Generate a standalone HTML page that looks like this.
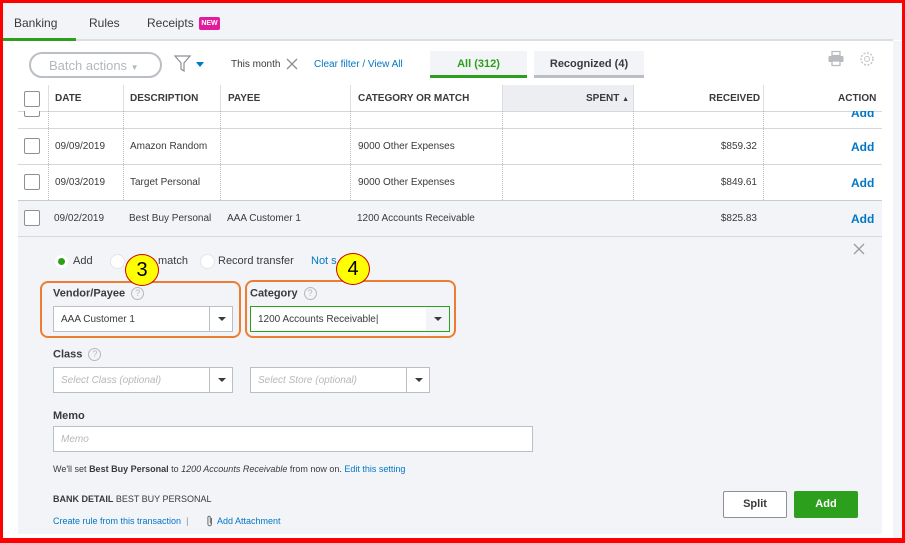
<!DOCTYPE html>
<html><head><style>
*{box-sizing:border-box;margin:0;padding:0}
body{width:905px;height:543px;overflow:hidden;background:#fff;font-family:"Liberation Sans",sans-serif;color:#393a3d;position:relative}
.a{position:absolute}
.t{font-size:11px;white-space:nowrap}
.h{font-size:10px;font-weight:bold;color:#393a3d}
.cb{position:absolute;width:16px;height:16px;border:1px solid #8d9096;border-radius:2px;background:#fff}
.vl{position:absolute;width:0;border-left:1px dotted #bbb}
.hl{position:absolute;height:1px;background:#d4d7dc}
.lnk{color:#0077c5}
.add{position:absolute;font-size:12px;font-weight:bold;color:#0077c5}
.amt{position:absolute;right:148px;font-size:10px;white-space:nowrap}
.inp{position:absolute;background:#fff;border:1px solid #babec5;height:26px;font-size:10px;padding:7px 7px;white-space:nowrap}
.dd{position:absolute;top:0;right:0;width:23px;height:24px;border-left:1px solid #babec5}
.dd:after{content:"";position:absolute;left:8px;top:10px;border:4px solid transparent;border-top:4px solid #393a3d}
.lab{position:absolute;font-size:11px;font-weight:bold;color:#393a3d}
.q{display:inline-block;width:13px;height:13px;border:1px solid #b5b7bb;border-radius:50%;font-size:9px;color:#b5b7bb;text-align:center;line-height:11px;font-weight:normal;margin-left:6px;vertical-align:middle}
.num{position:absolute;width:34px;height:32px;border-radius:50%;background:#ffff00;border:1px solid #c00;font-size:20px;text-align:center;line-height:31px;color:#000}
.ob{position:absolute;border:2px solid #ed7d31;border-radius:8px}
</style></head><body>
<div class="a" style="left:0;top:0;width:905px;height:40px;background:#f3f4f7"></div>
<div class="a" style="left:3px;top:39px;width:890px;height:2px;background:#dcdee2"></div>
<div class="a" style="left:3px;top:38px;width:73px;height:3px;background:#2ca01c"></div>
<div class="a t" style="left:14px;top:16px;font-size:12px">Banking</div>
<div class="a t" style="left:89px;top:16px;font-size:12px">Rules</div>
<div class="a t" style="left:147px;top:16px;font-size:12px">Receipts</div>
<div class="a" style="left:199px;top:17px;width:21px;height:13px;background:#e31c9e;border-radius:2px;color:#fff;font-size:7px;font-weight:bold;text-align:center;line-height:13px">NEW</div>
<div class="a" style="left:893px;top:41px;width:9px;height:500px;background:#f3f4f7"></div>
<div class="a" style="left:29px;top:52px;width:133px;height:26px;border:2px solid #babec5;border-radius:14px;color:#b5b7bb;font-size:13px;padding:4px 0 0 18px">Batch actions <span style="font-size:8px">▼</span></div>
<svg class="a" style="left:174px;top:55px" width="34" height="18"><path d="M1 1h15l-6 7v8l-3-2V8z" fill="none" stroke="#8d9096" stroke-width="1.2"/><path d="M22 7h8l-4 5z" fill="#0077c5"/></svg>
<div class="a t" style="left:231px;top:59px;font-size:10px">This month</div>
<svg class="a" style="left:286px;top:58px" width="12" height="12"><path d="M1 1l10 10M11 1L1 11" stroke="#8d9096" stroke-width="1.3"/></svg>
<div class="a t lnk" style="left:314px;top:59px;font-size:10px">Clear filter / View All</div>
<div class="a" style="left:430px;top:51px;width:97px;height:27px;background:#f3f4f7;border-bottom:3px solid #2ca01c;color:#2ca01c;font-size:11px;font-weight:bold;text-align:center;padding-top:7px">All (312)</div>
<div class="a" style="left:534px;top:51px;width:110px;height:27px;background:#f3f4f7;border-bottom:3px solid #babec5;font-size:11px;font-weight:bold;text-align:center;padding-top:7px">Recognized (4)</div>
<svg class="a" style="left:827px;top:50px" width="50" height="18"><path d="M5 1.5h8v4H5z" fill="none" stroke="#b8bbc0" stroke-width="1.3"/><rect x="1.5" y="6" width="15" height="6" rx="1" fill="#b8bbc0"/><rect x="5" y="11" width="8" height="4.5" fill="#fff" stroke="#b8bbc0" stroke-width="1.3"/><circle cx="40" cy="9" r="6" fill="none" stroke="#c4c6ca" stroke-width="1.5" stroke-dasharray="2 1.5"/><circle cx="40" cy="9" r="2.5" fill="none" stroke="#c4c6ca"/></svg>
<div class="a" style="left:502px;top:85px;width:131px;height:26px;background:#eceef1"></div>
<div class="hl" style="left:18px;top:111px;width:864px"></div>
<div class="cb" style="left:24px;top:91px"></div>
<div class="a" style="left:48px;top:85px;height:26px;border-left:1px solid #dcdee2"></div>
<div class="a" style="left:123px;top:85px;height:26px;border-left:1px solid #dcdee2"></div>
<div class="a" style="left:220px;top:85px;height:26px;border-left:1px solid #dcdee2"></div>
<div class="a" style="left:350px;top:85px;height:26px;border-left:1px solid #dcdee2"></div>
<div class="a" style="left:502px;top:85px;height:26px;border-left:1px solid #dcdee2"></div>
<div class="a" style="left:633px;top:85px;height:26px;border-left:1px solid #dcdee2"></div>
<div class="a" style="left:763px;top:85px;height:26px;border-left:1px solid #dcdee2"></div>
<div class="a h" style="left:55px;top:93px">DATE</div>
<div class="a h" style="left:130px;top:93px">DESCRIPTION</div>
<div class="a h" style="left:228px;top:93px">PAYEE</div>
<div class="a h" style="left:358px;top:93px">CATEGORY OR MATCH</div>
<div class="a h" style="left:586px;top:93px">SPENT <span style="font-size:7px">▲</span></div>
<div class="a h" style="left:709px;top:93px">RECEIVED</div>
<div class="a h" style="left:838px;top:93px">ACTION</div>
<div class="vl" style="left:48px;top:111px;height:89px"></div>
<div class="vl" style="left:123px;top:111px;height:89px"></div>
<div class="vl" style="left:220px;top:111px;height:89px"></div>
<div class="vl" style="left:350px;top:111px;height:89px"></div>
<div class="vl" style="left:502px;top:111px;height:89px"></div>
<div class="vl" style="left:633px;top:111px;height:89px"></div>
<div class="vl" style="left:763px;top:111px;height:89px"></div>
<div class="cb" style="left:24px;top:111px;height:6px;border-top:none;border-radius:0 0 2px 2px"></div>
<div class="add" style="left:851px;top:106px;clip-path:inset(5px 0 0 0)">Add</div>
<div class="hl" style="left:18px;top:128px;width:864px"></div>
<div class="cb" style="left:24px;top:138px"></div>
<div class="a t" style="left:55px;top:141px;font-size:10px">09/09/2019</div>
<div class="a t" style="left:130px;top:141px;font-size:10px">Amazon Random</div>
<div class="a t" style="left:358px;top:141px;font-size:10px">9000 Other Expenses</div>
<div class="amt" style="top:141px">$859.32</div>
<div class="add" style="left:851px;top:140px">Add</div>
<div class="hl" style="left:18px;top:164px;width:864px"></div>
<div class="cb" style="left:24px;top:174px"></div>
<div class="a t" style="left:55px;top:177px;font-size:10px">09/03/2019</div>
<div class="a t" style="left:130px;top:177px;font-size:10px">Target Personal</div>
<div class="a t" style="left:358px;top:177px;font-size:10px">9000 Other Expenses</div>
<div class="amt" style="top:177px">$849.61</div>
<div class="add" style="left:851px;top:176px">Add</div>
<div class="a" style="left:18px;top:200px;width:864px;height:334px;background:#f3f4f7;border-top:1px solid #c8cbd0"></div>
<div class="hl" style="left:18px;top:236px;width:864px;background:#d4d7dc"></div>
<div class="cb" style="left:24px;top:210px"></div>
<div class="a t" style="left:54px;top:213px;font-size:10px">09/02/2019</div>
<div class="a t" style="left:129px;top:213px;font-size:10px">Best Buy Personal</div>
<div class="a t" style="left:227px;top:213px;font-size:10px">AAA Customer 1</div>
<div class="a t" style="left:357px;top:213px;font-size:10px">1200 Accounts Receivable</div>
<div class="amt" style="top:213px">$825.83</div>
<div class="add" style="left:851px;top:212px">Add</div>
<svg class="a" style="left:853px;top:243px" width="12" height="12"><path d="M1 1l10 10M11 1L1 11" stroke="#9a9ca0" stroke-width="1.3"/></svg>
<div class="a" style="left:55px;top:255px;width:13px;height:13px;border-radius:50%;background:#fff"></div>
<div class="a" style="left:58px;top:258px;width:7px;height:7px;border-radius:50%;background:#2ca01c"></div>
<div class="a t" style="left:73px;top:255px">Add</div>
<div class="a" style="left:110px;top:254px;width:15px;height:15px;border-radius:50%;background:#fff;border:1px solid #e3e5e8"></div>
<div class="a t" style="left:158px;top:255px">match</div>
<div class="a" style="left:200px;top:254px;width:15px;height:15px;border-radius:50%;background:#fff;border:1px solid #e3e5e8"></div>
<div class="a t" style="left:218px;top:255px">Record transfer</div>
<div class="a t lnk" style="left:311px;top:255px">Not s</div>
<div class="ob" style="left:40px;top:281px;width:201px;height:57px"></div>
<div class="ob" style="left:245px;top:280px;width:211px;height:58px"></div>
<div class="num" style="left:125px;top:254px">3</div>
<div class="num" style="left:336px;top:253px">4</div>
<div class="lab" style="left:53px;top:287px">Vendor/Payee<span class="q">?</span></div>
<div class="inp" style="left:53px;top:306px;width:180px">AAA Customer 1<div class="dd"></div></div>
<div class="lab" style="left:250px;top:287px">Category<span class="q">?</span></div>
<div class="inp" style="left:250px;top:306px;width:200px;border-color:#2ca01c">1200 Accounts Receivable|<div class="dd" style="border-left:none;background:#f3f4f7"></div></div>
<div class="lab" style="left:53px;top:348px">Class<span class="q">?</span></div>
<div class="inp" style="left:53px;top:367px;width:180px;color:#b5b7bb;font-style:italic">Select Class (optional)<div class="dd"></div></div>
<div class="inp" style="left:250px;top:367px;width:180px;color:#b5b7bb;font-style:italic">Select Store (optional)<div class="dd"></div></div>
<div class="lab" style="left:53px;top:410px">Memo</div>
<div class="inp" style="left:53px;top:426px;width:480px;color:#b5b7bb;font-style:italic">Memo</div>
<div class="a t" style="left:53px;top:464px;font-size:9px">We'll set <b>Best Buy Personal</b> to <i>1200 Accounts Receivable</i> from now on. <span class="lnk">Edit this setting</span></div>
<div class="a t" style="left:53px;top:494px;font-size:9px"><b>BANK DETAIL</b> BEST BUY PERSONAL</div>
<div class="a t lnk" style="left:53px;top:516px;font-size:9px">Create rule from this transaction <span style="color:#8d9096">&nbsp;|&nbsp;</span></div>
<svg class="a" style="left:206px;top:515px" width="8" height="12"><path d="M5.5 3v6a1.8 1.8 0 0 1-3.6 0V2.5a1.2 1.2 0 0 1 2.4 0V8.5" fill="none" stroke="#6b6c72" stroke-width="1"/></svg>
<div class="a t lnk" style="left:217px;top:516px;font-size:9px">Add Attachment</div>
<div class="a" style="left:723px;top:491px;width:64px;height:27px;border:1px solid #8d9096;border-radius:2px;background:#fff;font-size:11px;font-weight:bold;text-align:center;line-height:25px">Split</div>
<div class="a" style="left:794px;top:491px;width:64px;height:27px;border-radius:2px;background:#2ca01c;color:#fff;font-size:11px;font-weight:bold;text-align:center;line-height:27px">Add</div>
<div class="a" style="left:0;top:0;width:905px;height:543px;border-style:solid;border-color:#f00;border-width:3px 3px 5px 3px"></div>
</body></html>
